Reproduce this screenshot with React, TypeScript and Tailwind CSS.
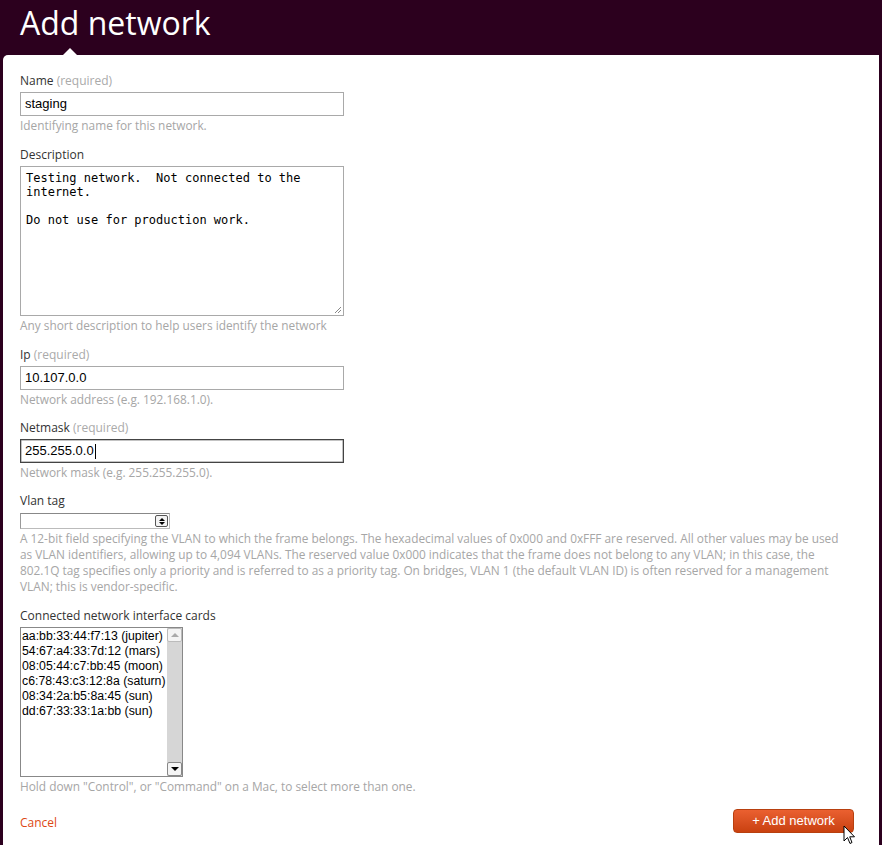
import React from "react";

const UI = { fontFamily: '"Open Sans", "DejaVu Sans", sans-serif' };
const ARIAL = { fontFamily: '"Liberation Sans", Arial, sans-serif' };
const MONO = { fontFamily: '"DejaVu Sans Mono", monospace' };

function Label({ text, required }: { text: string; required?: boolean }) {
  return (
    <div className="text-[12px] leading-[16px] text-[#333]" style={UI}>
      {text}
      {required && <span className="text-[#aaa]"> (required)</span>}
    </div>
  );
}

function Help({ children }: { children: React.ReactNode }) {
  return (
    <div className="text-[11.85px] leading-[16px] text-[#a6a6a6] mt-px" style={UI}>
      {children}
    </div>
  );
}

function TextInput({ value, focused }: { value: string; focused?: boolean }) {
  return (
    <div
      className={
        "mt-[3px] w-[324px] h-[24px] border bg-white flex items-center pl-[4px] text-[13px] text-black " +
        (focused ? "border-[#444] shadow-[inset_0_0_0_0.5px_#888]" : "border-[#a9a9a9]")
      }
      style={ARIAL}
    >
      <span>{value}</span>
      {focused && <span className="inline-block w-px h-[15px] bg-black ml-px" />}
    </div>
  );
}

export default function App() {
  const nics = [
    "aa:bb:33:44:f7:13 (jupiter)",
    "54:67:a4:33:7d:12 (mars)",
    "08:05:44:c7:bb:45 (moon)",
    "c6:78:43:c3:12:8a (saturn)",
    "08:34:2a:b5:8a:45 (sun)",
    "dd:67:33:33:1a:bb (sun)",
  ];
  return (
    <div className="w-[882px] h-[845px] bg-[#2c001e] px-[3px] overflow-hidden relative">
      <div className="h-[55px] pl-[17px] pt-[1px] text-white text-[32px] leading-[44px]" style={UI}>
        Add network
      </div>
      <div className="relative bg-white rounded-tl-[5px] h-[790px] w-[876px] pl-[17px] pt-[18px]">
        <div className="absolute left-[60px] top-[-7px] w-0 h-0 border-l-[7px] border-r-[7px] border-b-[7px] border-l-transparent border-r-transparent border-b-white" />

        <Label text="Name" required />
        <TextInput value="staging" />
        <Help>Identifying name for this network.</Help>

        <div className="mt-[14px]">
          <Label text="Description" />
          <div
            className="mt-[3px] w-[324px] h-[150px] border border-[#a9a9a9] relative px-[5px] pt-[4px] text-[12px] leading-[14px] text-black whitespace-pre"
            style={MONO}
          >
            {"Testing network.  Not connected to the\ninternet.\n\nDo not use for production work."}
            <svg className="absolute right-[1px] bottom-[1px]" width="8" height="8" viewBox="0 0 8 8">
              <path d="M7 1 L1 7 M7 4 L4 7" stroke="#888" strokeWidth="1" />
            </svg>
          </div>
          <Help>Any short description to help users identify the network</Help>
        </div>

        <div className="mt-[14px]">
          <Label text="Ip" required />
          <TextInput value="10.107.0.0" />
          <Help>Network address (e.g. 192.168.1.0).</Help>
        </div>

        <div className="mt-[13px]">
          <Label text="Netmask" required />
          <TextInput value="255.255.0.0" focused />
          <Help>Network mask (e.g. 255.255.255.0).</Help>
        </div>

        <div className="mt-[13px]">
          <Label text="Vlan tag" />
          <div className="mt-[4px] w-[150px] h-[16px] border border-[#bbb] border-t-[#888] border-l-[#999] bg-white relative">
            <div className="absolute right-[1px] top-[1px] w-[13px] h-[12px] border border-[#555] rounded-[2px] bg-[#f3f3f3] flex flex-col items-center justify-center gap-[1px]">
              <div className="w-0 h-0 border-l-[3px] border-r-[3px] border-b-[3px] border-l-transparent border-r-transparent border-b-black" />
              <div className="w-0 h-0 border-l-[3px] border-r-[3px] border-t-[3px] border-l-transparent border-r-transparent border-t-black" />
            </div>
          </div>
          <Help>
            <div className="whitespace-nowrap">A 12-bit field specifying the VLAN to which the frame belongs. The hexadecimal values of 0x000 and 0xFFF are reserved. All other values may be used</div>
            <div className="whitespace-nowrap">as VLAN identifiers, allowing up to 4,094 VLANs. The reserved value 0x000 indicates that the frame does not belong to any VLAN; in this case, the</div>
            <div className="whitespace-nowrap">802.1Q tag specifies only a priority and is referred to as a priority tag. On bridges, VLAN 1 (the default VLAN ID) is often reserved for a management</div>
            <div className="whitespace-nowrap">VLAN; this is vendor-specific.</div>
          </Help>
        </div>

        <div className="mt-[14px]">
          <Label text="Connected network interface cards" />
          <div className="mt-[3px] w-[163px] h-[150px] border border-[#888] bg-white flex">
            <div className="flex-1 pl-[1px] pt-[1px] text-[12.3px] leading-[15px] text-black" style={ARIAL}>
              {nics.map((n) => (
                <div key={n} className="whitespace-nowrap">{n}</div>
              ))}
            </div>
            <div className="w-[15px] h-full bg-[#d6d6d6] flex flex-col justify-between">
              <div className="h-[14px] bg-[#f4f4f4] border border-[#bbb] rounded-[2px] flex items-center justify-center">
                <div className="w-0 h-0 border-l-[4px] border-r-[4px] border-b-[4px] border-l-transparent border-r-transparent border-b-[#aaa]" />
              </div>
              <div className="h-[14px] bg-[#f4f4f4] border border-[#888] rounded-[2px] flex items-center justify-center">
                <div className="w-0 h-0 border-l-[4px] border-r-[4px] border-t-[4px] border-l-transparent border-r-transparent border-t-black" />
              </div>
            </div>
          </div>
          <Help>Hold down "Control", or "Command" on a Mac, to select more than one.</Help>
        </div>

        <div className="mt-[15px] flex items-center justify-between w-[834px]">
          <span className="text-[12px] leading-[16px] text-[#dd4814] pt-[4px]" style={UI}>Cancel</span>
          <button
            className="w-[121px] h-[24px] rounded-[4px] border border-[#b8400f] bg-gradient-to-b from-[#ea6030] to-[#c9410f] text-white text-[13px] leading-[20px]"
            style={ARIAL}
          >
            + Add network
          </button>
        </div>
      </div>
      <svg className="absolute left-[843px] top-[825px]" width="14" height="21" viewBox="0 0 14 21">
        <path d="M1 1 L1 16 L4.5 12.5 L7 18.5 L9 17.5 L6.7 11.8 L11.5 11.8 Z" fill="white" stroke="black" strokeWidth="1" strokeLinejoin="round" />
      </svg>
    </div>
  );
}
